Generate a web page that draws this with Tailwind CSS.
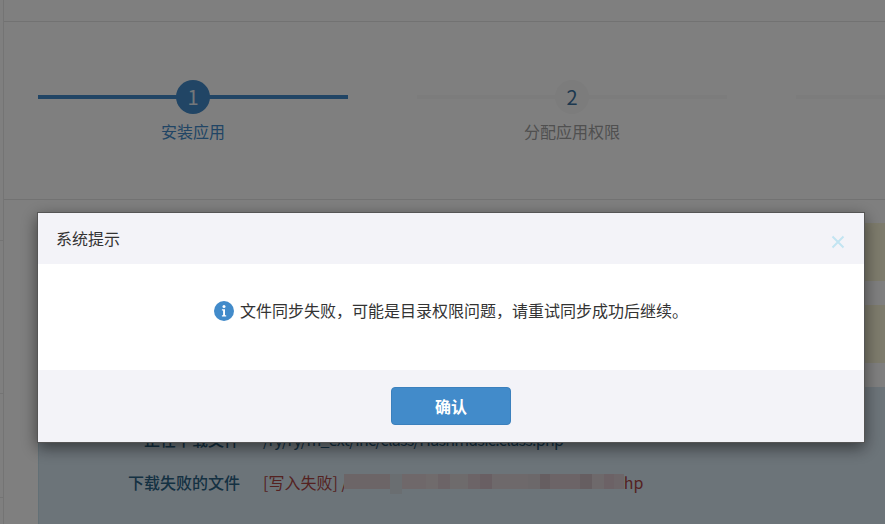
<!DOCTYPE html>
<html lang="zh">
<head>
<meta charset="utf-8">
<script src="https://cdn.jsdelivr.net/npm/@tailwindcss/browser@4"></script>
</head>
<body class="h-[524px] overflow-hidden bg-white font-['Noto_Sans_CJK_SC','Noto_Sans',sans-serif] text-base text-[#333]">
<div class="flex h-[524px] overflow-hidden">
  <div class="flex w-[4px] shrink-0 flex-col border-r border-[#e8e8e8]">
    <div class="h-[241px] shrink-0 border-b border-[#e8e8e8]"></div>
    <div class="h-[153px] shrink-0 border-b border-[#e8e8e8]"></div>
    <div class="h-[104px] shrink-0 border-b border-[#e8e8e8]"></div>
  </div>
  <div class="flex min-w-0 flex-1 flex-col">
    <div class="h-[22px] shrink-0 border-b border-[#e5e5e5]"></div>
    <div class="flex h-[178px] shrink-0 gap-[69px] overflow-hidden border-b border-[#e5e5e5] pl-[34px] pt-[58px]">
      <div class="relative flex w-[310px] shrink-0 flex-col items-center">
        <div class="absolute top-[15px] h-[4px] w-full bg-[#428bca]"></div>
        <div class="relative flex h-[34px] w-[34px] items-center justify-center rounded-full bg-[#428bca] text-[20px] text-[#e8eef4]">1</div>
        <div class="mt-[5px] text-[16px] leading-[24px] text-[#428bca]">安装应用</div>
      </div>
      <div class="relative flex w-[310px] shrink-0 flex-col items-center">
        <div class="absolute top-[15px] h-[4px] w-full bg-[#f8f8f8]"></div>
        <div class="relative flex h-[34px] w-[34px] items-center justify-center rounded-full bg-[#f8f8f8] text-[20px] text-[#39709f]">2</div>
        <div class="mt-[5px] text-[16px] leading-[24px] text-[#a0a0a0]">分配应用权限</div>
      </div>
      <div class="relative w-[310px] shrink-0">
        <div class="absolute top-[15px] h-[4px] w-full bg-[#f8f8f8]"></div>
      </div>
    </div>
    <div class="flex min-h-0 flex-1 flex-col gap-[24px] pl-[34px] pt-[23px]">
      <div class="h-[58px] shrink-0 bg-[#faf6d8]"></div>
      <div class="h-[58px] shrink-0 bg-[#faf6d8]"></div>
      <div class="flex-1 border-l border-[#c6e0ec] bg-[#d9e8f3] pt-[30px]">
        <div class="flex h-[43px] items-center gap-[23px]">
          <div class="w-[201px] shrink-0 text-right font-medium text-[#2a6285]">正在下载文件</div>
          <div class="tracking-[-0.7px] text-[#2a6285]">/ry/ry/m_ext/inc/class/Hashmusic.class.php</div>
        </div>
        <div class="flex h-[43px] items-center gap-[23px]">
          <div class="w-[201px] shrink-0 text-right font-medium text-[#2a6285]">下载失败的文件</div>
          <div class="flex items-center text-[#a94442]">
            <span>[写入失败] /</span>
            <span class="-ml-[4px] flex h-[15px] w-[280px] bg-[#dacdd2]">
              <span class="h-full w-[46px] bg-[#d8cacf]"></span>
              <span class="h-[20px] w-[12px] bg-[#d5dde2]"></span>
              <span class="h-full w-[24px] bg-[#dfd0d4]"></span>
              <span class="h-full w-[12px] bg-[#e0d6d9]"></span>
              <span class="h-full w-[12px] bg-[#d8c8ce]"></span>
              <span class="h-full w-[18px] bg-[#dcd6d8]"></span>
              <span class="h-full w-[12px] bg-[#d8c8ce]"></span>
              <span class="h-full w-[12px] bg-[#d2bec6]"></span>
              <span class="h-full w-[36px] bg-[#dcd2d6]"></span>
              <span class="h-full w-[12px] bg-[#d8d0d4]"></span>
              <span class="h-full w-[10px] bg-[#ccbcc2]"></span>
              <span class="h-full w-[30px] bg-[#d8c8ce]"></span>
              <span class="h-full w-[12px] bg-[#ccbcc2]"></span>
              <span class="h-full w-[12px] bg-[#dcd2d6]"></span>
              <span class="h-full w-[10px] bg-[#d8c4cc]"></span>
            </span>
            <span>hp</span>
          </div>
        </div>
      </div>
    </div>
  </div>
</div>

<div class="fixed inset-0 bg-black/50"></div>

<div class="fixed left-[37px] top-[212px] w-[828px] border border-[#555] bg-white shadow-[0_5px_15px_rgba(0,0,0,0.5)]">
  <div class="flex h-[51px] items-center justify-between bg-[#f3f3f8] pl-[18px] pr-[19px]">
    <span class="-mt-[2px] text-[16px] text-[#333]">系统提示</span>
    <svg class="mt-[7px]" width="14" height="14" viewBox="0 0 14 14" fill="none" stroke="#c2e4f2" stroke-width="2"><path d="M1.5 1.5 12.5 12.5M12.5 1.5 1.5 12.5"/></svg>
  </div>
  <div class="flex h-[106px] justify-center bg-white pt-[33px]">
    <div class="flex h-[26px] items-center gap-[6px]">
      <svg width="20" height="20" viewBox="0 0 20 20" class="mt-[1px]">
        <circle cx="10" cy="10" r="10" fill="#428bca"/>
        <circle cx="10" cy="5.6" r="1.5" fill="#fff"/>
        <path d="M7.9 8.2H11V14.2H12.2V15.4H7.9V14.2H9.1V9.4H7.9Z" fill="#fff"/>
      </svg>
      <span class="-mt-[1px] text-[16px] leading-[24px] text-[#333]">文件同步失败，可能是目录权限问题，请重试同步成功后继续。</span>
    </div>
  </div>
  <div class="flex h-[72px] justify-center bg-[#f3f3f8] pt-[17px]">
    <button class="h-[38px] w-[120px] rounded-[4px] border border-[#3b80bd] bg-[#428bca] text-[16px] font-bold text-white">确认</button>
  </div>
</div>
</body>
</html>
